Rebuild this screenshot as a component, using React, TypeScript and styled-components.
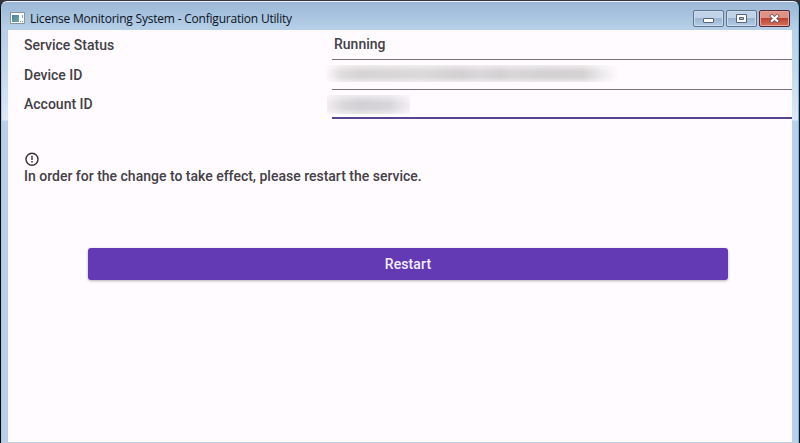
import React from 'react';
import styled, { createGlobalStyle } from 'styled-components';

const GlobalStyle = createGlobalStyle`
  * { box-sizing: border-box; }
  html, body { margin: 0; background: #07090d; overflow: hidden; }
`;

const Desktop = styled.div`
  width: 800px;
  height: 443px;
  padding: 1px 1px 0 1px;
  background: linear-gradient(#34343f 0 2px, #020406 12px);
  font-family: Roboto, sans-serif;
`;

const Window = styled.div`
  display: flex;
  flex-direction: column;
  height: 442px;
  padding: 0 6px 1px;
  border: 1px solid #e4f1fb;
  border-top-color: #edf3fa;
  border-left-color: #a5c8e8;
  border-right-color: #54c5e6;
  border-bottom: 0;
  border-radius: 6px 6px 0 0;
  background: linear-gradient(#9bb7d5 0, #a9c4e0 14px, #b7d0e8 28px, #c0d6ec 60px, #dce9f6 118px, #b8d0ea 119px);
`;

const TitleBar = styled.header`
  display: flex;
  flex: 0 0 28px;
  align-items: flex-start;
  padding: 8px 2px 0 2px;
`;

const IconSlot = styled.span`
  display: flex;
  padding-top: 2px;
`;

const Title = styled.h1`
  flex: 1;
  margin: 1px 0 0 5px;
  color: #0a1220;
  font: 400 12px/16px 'Open Sans', 'Noto Sans', sans-serif;
  letter-spacing: -0.21px;
  white-space: nowrap;
`;

const Controls = styled.div`
  display: flex;
  gap: 2px;
`;

const ControlButton = styled.button<{ $danger?: boolean }>`
  display: flex;
  align-items: center;
  justify-content: center;
  width: 31px;
  height: 17px;
  padding: 0;
  border: 1px solid ${p => (p.$danger ? '#532737' : '#60738d')};
  border-radius: 2px;
  box-shadow: inset 0 0 0 1px ${p => (p.$danger ? '#e6a399' : '#cbdcef')};
  background: ${p => p.$danger
    ? 'linear-gradient(#dd9284 0 45%, #bd4331 50%, #d5735c)'
    : 'linear-gradient(#bfd2e8 0 45%, #9bb5d2 50%, #b3cce5)'};
`;

const Client = styled.main`
  flex: 1;
  overflow: hidden;
  background: #fffbff;
  color: #434046;
  font-size: 14px;
  font-weight: 500;
`;

const Fields = styled.section`
  padding-left: 16px;
`;

const FieldRow = styled.div<{ $height: number }>`
  display: grid;
  grid-template-columns: 308px 1fr;
  height: ${p => p.$height}px;
`;

const Label = styled.label<{ $top: number }>`
  padding-top: ${p => p.$top}px;
  line-height: 16px;
`;

const Value = styled.div<{ $active?: boolean }>`
  display: flex;
  align-items: flex-start;
  border-bottom: ${p => (p.$active ? '2px solid #59458f' : '1px solid #77727b')};
`;

const Status = styled.span`
  padding: 6px 0 0 2px;
  line-height: 16px;
`;

const Redacted = styled.div<{ $width: number; $height: number; $top: number; $left: number; $compact?: boolean }>`
  width: ${p => p.$width}px;
  height: ${p => p.$height}px;
  margin: ${p => p.$top}px 0 0 ${p => p.$left}px;
  mask-image: linear-gradient(#0006, #000 40% 70%, #0007);
  background: ${p => p.$compact
    ? 'linear-gradient(90deg, #f1eef2 0, #dddade 15px, #d3d0d5 32px, #d9d6db 62px, #e9e6eb 75px, #f3f0f5)'
    : 'linear-gradient(90deg, #fffbff00, #e0ddde 16px, #d7d4d5 35px, #dad7d8 75px, #dcd9da 95px, #d3d0d2 137px, #dad7da 153px, #d4d1d3 175px, #d9d6d8 187px, #d4d1d3 220px, #d5d2d3 258px, #f0edf1 279px, #fffbff00)'};
`;

const Notice = styled.section`
  padding: 32px 16px 0;
`;

const NoticeIcon = styled.svg`
  display: block;
  width: 16px;
  height: 16px;
`;

const NoticeText = styled.p`
  margin: 0;
  line-height: 18px;
  white-space: nowrap;
`;

const RestartButton = styled.button`
  display: block;
  width: 640px;
  height: 32px;
  margin: 63px 0 0 80px;
  border: 0;
  border-radius: 3px;
  background: #6339b4;
  color: #f4edff;
  box-shadow: 0 1px 3px #0000004d;
  font: 500 14px/16px Roboto, sans-serif;
  letter-spacing: 0.1px;
`;

function AppIcon() {
  return (
    <svg width="15" height="12" viewBox="0 0 15 12">
      <defs><linearGradient id="screen" x2="1" y2="1"><stop stopColor="#477fa6" /><stop offset="1" stopColor="#6fae94" /></linearGradient></defs>
      <path fill="#f9fbfc" stroke="#8b939c" d="M.5.5h14v11H.5z" />
      <path fill="url(#screen)" d="M2 3h7v7H2z" />
      <path fill="#8b9da9" d="M12 3h1v3h-1zM10 9h1v1h-1zM12 9h1v1h-1z" />
    </svg>
  );
}

export default function App() {
  return (
    <Desktop>
      <GlobalStyle />
      <Window>
        <TitleBar>
          <IconSlot><AppIcon /></IconSlot>
          <Title>License Monitoring System - Configuration Utility</Title>
          <Controls>
            <ControlButton aria-label="Minimize">
              <svg width="11" height="11" viewBox="0 0 11 11"><rect x=".5" y="5.5" width="10" height="4" rx=".5" fill="#fff" stroke="#586377" /></svg>
            </ControlButton>
            <ControlButton aria-label="Maximize">
              <svg width="11" height="9" viewBox="0 0 11 9"><path d="M.5.5h10v8H.5z" fill="#fff" stroke="#586377" /><path d="M3.5 3.5h4v2h-4z" fill="#a9bdd4" stroke="#586377" /></svg>
            </ControlButton>
            <ControlButton $danger aria-label="Close">
              <svg width="11" height="9" viewBox="0 0 11 9"><path d="M1.5 1l8 7M9.5 1l-8 7" stroke="#584457" strokeWidth="3.6" /><path d="M2 1.4l7 6.2M9 1.4L2 7.6" stroke="#fff" strokeWidth="2.1" /></svg>
            </ControlButton>
          </Controls>
        </TitleBar>
        <Client>
          <Fields>
            <FieldRow $height={30}>
              <Label $top={7}>Service Status</Label>
              <Value><Status>Running</Status></Value>
            </FieldRow>
            <FieldRow $height={30}>
              <Label $top={7}>Device ID</Label>
              <Value><Redacted $width={294} $height={17} $top={5} $left={-7} /></Value>
            </FieldRow>
            <FieldRow $height={29}>
              <Label $top={6}>Account ID</Label>
              <Value $active><Redacted $compact $width={83} $height={19} $top={5} $left={-5} /></Value>
            </FieldRow>
          </Fields>
          <Notice>
            <NoticeIcon viewBox="0 0 16 16" fill="none" stroke="#353238" strokeWidth="1.4">
              <circle cx="8" cy="8.2" r="6" />
              <path d="M8 4.7v4.2M8 10.1v1.5" />
            </NoticeIcon>
            <NoticeText>In order for the change to take effect, please restart the service.</NoticeText>
          </Notice>
          <RestartButton>Restart</RestartButton>
        </Client>
      </Window>
    </Desktop>
  );
}
